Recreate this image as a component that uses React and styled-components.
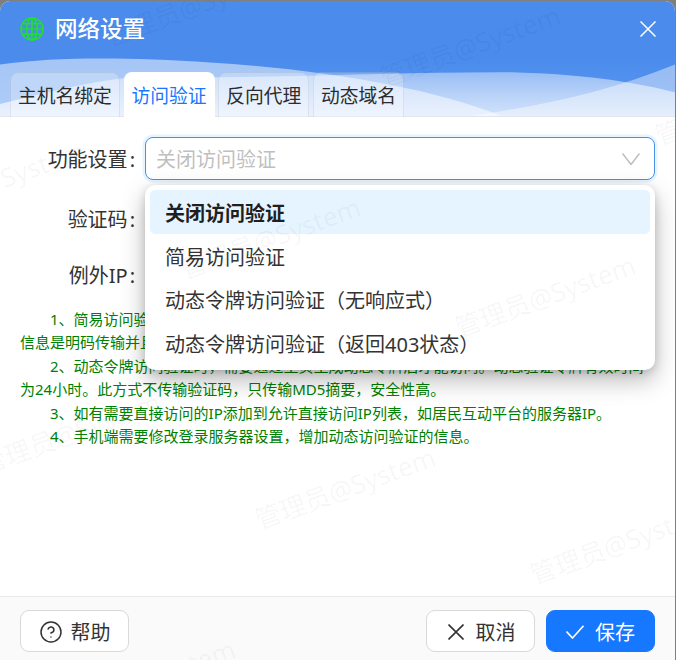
import React from "react";
import styled, { createGlobalStyle } from "styled-components";
import { CircleHelp } from "lucide-react";

const options = [
  "关闭访问验证",
  "简易访问验证",
  "动态令牌访问验证（无响应式）",
  "动态令牌访问验证（返回403状态）",
];

const tabs = ["主机名绑定", "访问验证", "反向代理", "动态域名"];

// watermark repeats on a skewed lattice
const marks = [
  [195, 4], [470, 45], [745, 103],
  [-5, 180], [270, 237], [545, 295],
  [70, 432], [345, 487], [620, 542],
  [145, 679],
];

const App = () => {
  return (
    <Window>
      <GlobalStyle />
      <Header>
        <Waves viewBox="0 0 675 117" preserveAspectRatio="none">
          <defs>
            <linearGradient id="band" x1="0" y1="0" x2="0" y2="1">
              <stop offset="0" stopColor="#fff" stopOpacity=".42" />
              <stop offset="1" stopColor="#fff" stopOpacity=".72" />
            </linearGradient>
          </defs>
          <path d="M0 105 C40 95 80 84 130 78 C260 80 400 72 518 73 C590 75 640 84 675 93 L675 117 L0 117 Z" fill="url(#band)" />
          <path d="M0 65 C60 57 130 58 210 63 C320 70 430 88 501 117 L0 117 Z" fill="rgba(255,255,255,.5)" />
          <path d="M470 117 C540 107 610 92 675 65 L675 117 Z" fill="rgba(255,255,255,.42)" />
        </Waves>
        <TitleBar>
          <GlobeIcon viewBox="0 0 24 24">
            <circle cx="12" cy="12" r="11" />
            <ellipse cx="12" cy="12" rx="5.2" ry="11" />
            <path d="M12 1V23M1 12H23M2.6 6.6H21.4M2.6 17.4H21.4" />
          </GlobeIcon>
          <Title>网络设置</Title>
          <CloseButton viewBox="0 0 16 16"><path d="M.5.5L15.5 15.5M15.5.5L.5 15.5" /></CloseButton>
        </TitleBar>
        <TabBar>
          {tabs.map((t, i) => (
            <Tab key={t} $active={i === 1}>{t}</Tab>
          ))}
        </TabBar>
      </Header>

      <Body>
        <FormRow $gap={16.5}>
          <Label>功能设置<Colon>:</Colon></Label>
          <SelectWrap>
            <SelectBox $focus>
              <Placeholder>关闭访问验证</Placeholder>
              <Chevron viewBox="0 0 18 12"><path d="M.5.5L9 11.5L17.5.5" /></Chevron>
            </SelectBox>
            <Menu>
              {options.map((o, i) => (
                <Option key={o} $selected={i === 0}>{o}</Option>
              ))}
            </Menu>
          </SelectWrap>
        </FormRow>
        <FormRow $gap={13}>
          <Label>验证码<Colon>:</Colon></Label>
          <SelectWrap><SelectBox /></SelectWrap>
        </FormRow>
        <FormRow $gap={12}>
          <Label>例外IP<Colon>:</Colon></Label>
          <SelectWrap><SelectBox /></SelectWrap>
        </FormRow>

        <Note>1、简易访问验证：输入验证码后才能访问，验证码需要在登录时输入。此方式验证<br />信息是明码传输并且固定不变，安全性较低。</Note>
        <Note>2、动态令牌访问验证时，需要通过主页生成动态令牌后才能访问。动态验证令牌有效时间为24小时。此方式不传输验证码，只传输MD5摘要，安全性高。</Note>
        <Note>3、如有需要直接访问的IP添加到允许直接访问IP列表，如居民互动平台的服务器IP。</Note>
        <Note>4、手机端需要修改登录服务器设置，增加动态访问验证的信息。</Note>
      </Body>

      <Footer>
        <FootButton><CircleHelp size={24} strokeWidth={1.5} />帮助</FootButton>
        <Spacer />
        <FootButton $gap={12} $shift={2}>
          <BtnIcon viewBox="0 0 16 16" $w={16} $h={16}><path d="M.5.5L15.5 15.5M15.5.5L.5 15.5" /></BtnIcon>
          取消
        </FootButton>
        <FootButton $primary $gap={11}>
          <BtnIcon viewBox="0 0 18 14" $w={18} $h={14}><path d="M.5 6.5L6.5 13L17.5.8" /></BtnIcon>
          保存
        </FootButton>
      </Footer>

      <Watermark>
        {marks.map(([x, y]) => (
          <Mark key={`${x}-${y}`} style={{ left: x, top: y }}>管理员@System</Mark>
        ))}
      </Watermark>
    </Window>
  );
};
export default App;

const GlobalStyle = createGlobalStyle`
  html, body {
    margin: 0;
    padding: 0;
    background: #7f7f7f;
    overflow: hidden;
  }
  * {
    box-sizing: border-box;
  }
`;

const Window = styled.div`
  position: relative;
  width: 675px;
  height: 659px;
  margin-top: 1px;
  background: #fff;
  border-radius: 10px 10px 0 0;
  overflow: hidden;
  display: flex;
  flex-direction: column;
  font-family: "Noto Sans", "Noto Sans CJK SC", sans-serif;
  color: #333;
`;

const Header = styled.header`
  position: relative;
  height: 116px;
  flex: none;
  display: flex;
  flex-direction: column;
  justify-content: space-between;
  background: linear-gradient(180deg, #4a8bec 0%, #4a8bec 50%, #5f9af0 100%);
  border-bottom: 1px solid #e2e6ec;
`;

const Waves = styled.svg`
  position: absolute;
  left: 0;
  top: -1px;
  width: 100%;
  height: 116px;
`;

const TitleBar = styled.div`
  position: relative;
  display: flex;
  align-items: center;
  height: 56px;
  padding: 0 19px 0 20px;
`;

const GlobeIcon = styled.svg`
  width: 24px;
  height: 24px;
  fill: none;
  stroke: #22dd33;
  stroke-width: 1.6;
`;

const Title = styled.h1`
  margin: 0 0 0 11px;
  font-size: 22.5px;
  font-weight: 500;
  color: #fff;
  line-height: 1;
`;

const CloseButton = styled.svg`
  margin-left: auto;
  width: 16px;
  height: 16px;
  fill: none;
  stroke: #fff;
  stroke-width: 1.5;
`;

const TabBar = styled.div`
  position: relative;
  display: flex;
  gap: 3.75px;
  padding-left: 10px;
`;

const Tab = styled.div`
  height: 45px;
  margin-bottom: -1px;
  padding: 0 7px 1px;
  display: flex;
  align-items: center;
  font-size: 18.75px;
  color: ${(p) => (p.$active ? "#1677ff" : "#2c2c2c")};
  background: ${(p) => (p.$active ? "#fff" : "rgba(255,255,255,.25)")};
  border: 1px solid ${(p) => (p.$active ? "#fff" : "rgba(0,0,0,.07)")};
  border-bottom: none;
  border-radius: 8px 8px 0 0;
`;

const Body = styled.main`
  flex: 1;
  padding: 20px 20px 0;
`;

const FormRow = styled.div`
  display: flex;
  align-items: center;
  gap: 10px;
  height: 43px;
  margin-bottom: ${(p) => p.$gap}px;
`;

const Label = styled.label`
  width: 115px;
  font-size: 20px;
  text-align: right;
  white-space: nowrap;
  color: #333;
`;

const Colon = styled.span`
  margin-left: 2px;
`;

const SelectWrap = styled.div`
  position: relative;
  flex: 1;
  height: 100%;
`;

const SelectBox = styled.div`
  height: 100%;
  padding: 0 14px 0 10px;
  display: flex;
  align-items: center;
  justify-content: space-between;
  background: #fff;
  border: 1px solid ${(p) => (p.$focus ? "#4a90e2" : "#d9d9d9")};
  border-radius: 8px;
  box-shadow: ${(p) => (p.$focus ? "0 0 0 2.5px rgba(5,145,255,.1)" : "none")};
`;

const Placeholder = styled.span`
  font-size: 20px;
  color: #bfbfbf;
`;

const Chevron = styled.svg`
  width: 18px;
  height: 12px;
  fill: none;
  stroke: #bdbdbd;
  stroke-width: 1.5;
`;

const Menu = styled.div`
  position: absolute;
  z-index: 2;
  top: 48px;
  left: 0;
  right: 0;
  padding: 5px;
  background: #fff;
  border-radius: 10px;
  box-shadow: 0 10px 24px rgba(0, 0, 0, 0.28), 0 2px 8px rgba(0, 0, 0, 0.15);
`;

const Option = styled.div`
  height: 43.75px;
  padding: 1px 15px 0;
  display: flex;
  align-items: center;
  font-size: 20px;
  font-weight: ${(p) => (p.$selected ? 700 : 400)};
  color: ${(p) => (p.$selected ? "#1f1f1f" : "#333")};
  background: ${(p) => (p.$selected ? "#e6f4ff" : "transparent")};
  border-radius: 5px;
`;

const Note = styled.p`
  margin: 0;
  font-size: 15px;
  line-height: 23.6px;
  color: #008000;
  text-indent: 30px;
`;

const Footer = styled.footer`
  height: 64px;
  flex: none;
  display: flex;
  align-items: flex-start;
  gap: 11px;
  padding: 13px 20px 0;
  background: #fafafa;
  border-top: 1px solid #e8e8e8;
`;

const Spacer = styled.div`
  flex: 1;
`;

const FootButton = styled.button`
  width: 109px;
  height: 42px;
  padding: 1px 0 0 ${(p) => p.$shift || 0}px;
  display: flex;
  align-items: center;
  justify-content: center;
  gap: ${(p) => p.$gap || 8}px;
  font-family: inherit;
  font-size: 20px;
  color: ${(p) => (p.$primary ? "#fff" : "#333")};
  background: ${(p) => (p.$primary ? "#1677ff" : "#fff")};
  border: 1px solid ${(p) => (p.$primary ? "#1677ff" : "#d9d9d9")};
  border-radius: 9px;
`;

const BtnIcon = styled.svg`
  width: ${(p) => p.$w}px;
  height: ${(p) => p.$h}px;
  fill: none;
  stroke: currentColor;
  stroke-width: 1.6;
`;

const Watermark = styled.div`
  position: absolute;
  inset: 0;
  z-index: 5;
  pointer-events: none;
  overflow: hidden;
`;

const Mark = styled.span`
  position: absolute;
  width: 200px;
  margin: -18px 0 0 -100px;
  line-height: 36px;
  text-align: center;
  white-space: nowrap;
  font-size: 26px;
  color: rgba(0, 0, 0, 0.045);
  transform: rotate(-20deg);
`;
